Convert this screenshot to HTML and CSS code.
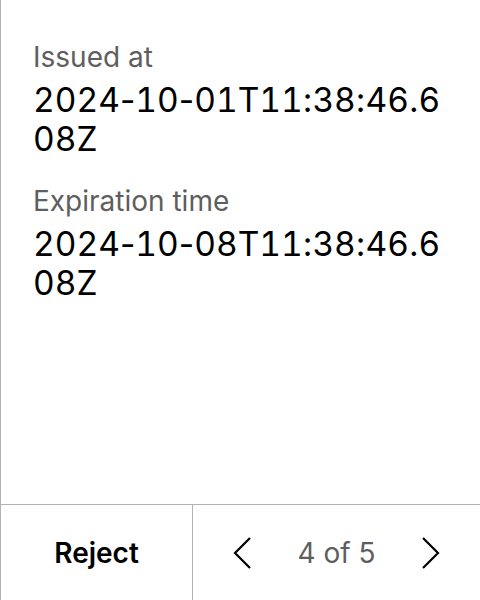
FILE: index.html
```html
<!DOCTYPE html>
<html>
<head>
<meta charset="utf-8">
<link rel="stylesheet" href="styles.css">
</head>
<body>
<div class="screen">
  <main class="content">
    <div class="field">
      <div class="label">Issued at</div>
      <div class="value"><span class="num">2024</span>-<span class="num">10</span>-<span class="num">01</span>T<span class="num">11</span>:<span class="num">38</span>:<span class="num">46</span>.<span class="num">608</span>Z</div>
    </div>
    <div class="field">
      <div class="label">Expiration time</div>
      <div class="value"><span class="num">2024</span>-<span class="num">10</span>-<span class="num">08</span>T<span class="num">11</span>:<span class="num">38</span>:<span class="num">46</span>.<span class="num">608</span>Z</div>
    </div>
  </main>
  <footer class="footer">
    <button class="reject">Reject</button>
    <div class="pager">
      <span class="chev">
        <svg width="18" height="32" viewBox="0 0 18 32"><path d="M17 1 L2 16 L17 31" fill="none" stroke="#000" stroke-width="2.2"/></svg>
      </span>
      <span class="count">4 of 5</span>
      <span class="chev">
        <svg width="18" height="32" viewBox="0 0 18 32"><path d="M1 1 L16 16 L1 31" fill="none" stroke="#000" stroke-width="2.2"/></svg>
      </span>
    </div>
  </footer>
</div>
</body>
</html>
```
FILE: styles.css
```css
* { box-sizing: border-box; }
html, body { margin: 0; padding: 0; background: #fff; }
body { font-family: Inter, "Noto Sans", sans-serif; }
.screen {
  width: 480px;
  height: 600px;
  display: flex;
  flex-direction: column;
  border-left: 1px solid #b3b3b3;
}
.content {
  flex: 1;
  padding: 39px 32px 0 32px;
  display: flex;
  flex-direction: column;
  gap: 24px;
}
.label {
  font-size: 28px;
  line-height: 36px;
  color: #5e5e5e;
}
.value {
  margin-top: 6px;
  font-size: 33.5px;
  line-height: 39px;
  color: #000;
  word-break: break-all;
}
.num { font-variant-numeric: tabular-nums; }
.footer {
  height: 96px;
  border-top: 1px solid #b3b3b3;
  display: flex;
}
.reject {
  width: 192px;
  border: 0;
  border-right: 1px solid #b3b3b3;
  background: #fff;
  font-family: inherit;
  font-size: 28px;
  font-weight: 600;
  color: #000;
  padding: 0;
}
.pager {
  flex: 1;
  display: flex;
  align-items: center;
  justify-content: space-between;
  padding: 0 40px;
}
.chev { display: flex; }
.count {
  font-size: 28px;
  color: #5e5e5e;
}
```
